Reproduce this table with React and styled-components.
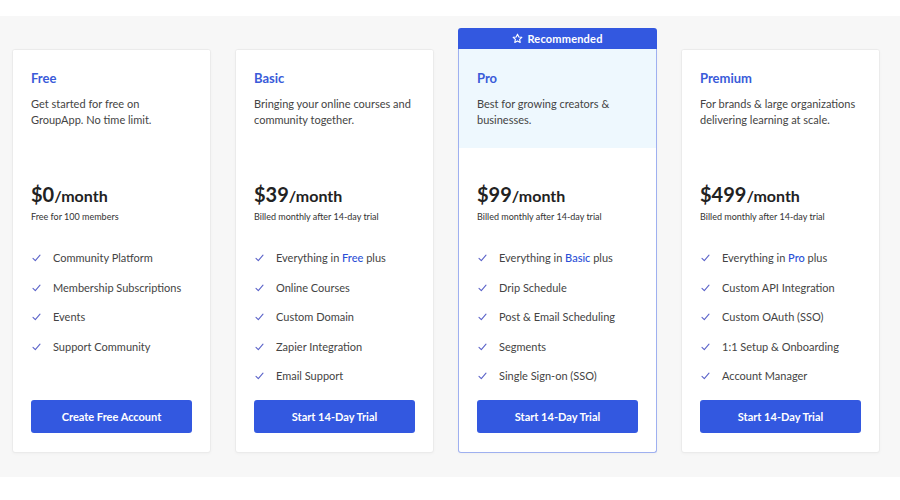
import styled, { createGlobalStyle } from "styled-components";

const GlobalStyle = createGlobalStyle`
  body {
    margin: 0;
    background: #ffffff;
    font-family: Lato, "Open Sans", sans-serif;
  }
`;

const Section = styled.section`
  margin-top: 16px;
  background: #f7f7f7;
  padding: 12px 20px 24px 12px;
`;

const Row = styled.div`
  display: flex;
  align-items: flex-end;
  gap: 24px;
`;

const Plan = styled.div`
  width: 199px;
  display: flex;
  flex-direction: column;
`;

const Banner = styled.div`
  height: 21px;
  background: #3358e0;
  border-radius: 3px 3px 0 0;
  color: #fff;
  font-size: 11px;
  font-weight: 700;
  display: flex;
  align-items: center;
  justify-content: center;
  gap: 4px;
  letter-spacing: 0.2px;
`;

const Card = styled.div`
  height: 404px;
  box-sizing: border-box;
  background: #fff;
  border: 1px solid ${(p) => (p.$featured ? "#9fb0f0" : "#ebebeb")};
  border-top: ${(p) => (p.$featured ? "none" : "1px solid #ebebeb")};
  border-radius: ${(p) => (p.$featured ? "0 0 3px 3px" : "3px")};
  box-shadow: 0 1px 3px rgba(0, 0, 0, 0.03);
  display: flex;
  flex-direction: column;
  overflow: hidden;
`;

const Header = styled.div`
  padding: ${(p) => (p.$featured ? "21px" : "20px")} 18px 20px;
  background: ${(p) => (p.$featured ? "#eef8fe" : "#fff")};
`;

const Name = styled.div`
  color: #3a5bd9;
  font-size: 13px;
  font-weight: 700;
  line-height: 16px;
`;

const Desc = styled.p`
  margin: 10px 0 0;
  color: #444;
  font-size: 11px;
  line-height: 16px;
`;

const Body = styled.div`
  flex: 1;
  padding: 34px 18px 19px;
  display: flex;
  flex-direction: column;
`;

const Price = styled.div`
  color: #222;
  font-size: 20px;
  font-weight: 700;
  line-height: 24px;
`;

const Per = styled.span`
  font-size: 16px;
`;

const Note = styled.div`
  margin-top: 3px;
  color: #333;
  font-size: 9px;
  line-height: 12px;
`;

const Features = styled.ul`
  list-style: none;
  margin: 27px 0 0;
  padding: 0;
  display: flex;
  flex-direction: column;
  gap: 13.5px;
`;

const Feature = styled.li`
  display: flex;
  align-items: center;
  gap: 12px;
  color: #444;
  font-size: 11px;
  line-height: 16px;
  padding-left: 1px;
`;

const Link = styled.span`
  color: #2b4fd6;
  font-weight: 500;
`;

const Button = styled.button`
  margin-top: auto;
  height: 33px;
  border: none;
  border-radius: 3px;
  background: #3358e0;
  color: #fff;
  font-family: inherit;
  font-size: 11px;
  font-weight: 700;
  cursor: pointer;
`;

const Check = () => (
  <svg width="9" height="8" viewBox="0 0 9 8" fill="none">
    <path d="M1 4.4 L3.3 6.6 L8 1.2" stroke="#5b63c9" strokeWidth="1.1" strokeLinecap="round" strokeLinejoin="round" />
  </svg>
);

const Star = () => (
  <svg width="11" height="11" viewBox="0 0 24 24" fill="none" stroke="#fff" strokeWidth="2.4" strokeLinejoin="round">
    <path d="M12 2.5l2.9 6.1 6.6.8-4.9 4.6 1.3 6.6L12 17.3l-5.9 3.3 1.3-6.6-4.9-4.6 6.6-.8z" />
  </svg>
);

const plans = [
  {
    name: "Free",
    desc: "Get started for free on GroupApp. No time limit.",
    price: "$0",
    note: "Free for 100 members",
    features: ["Community Platform", "Membership Subscriptions", "Events", "Support Community"],
    cta: "Create Free Account",
  },
  {
    name: "Basic",
    desc: "Bringing your online courses and community together.",
    price: "$39",
    note: "Billed monthly after 14-day trial",
    base: "Free",
    features: ["Online Courses", "Custom Domain", "Zapier Integration", "Email Support"],
    cta: "Start 14-Day Trial",
  },
  {
    name: "Pro",
    desc: "Best for growing creators & businesses.",
    price: "$99",
    note: "Billed monthly after 14-day trial",
    base: "Basic",
    featured: true,
    features: ["Drip Schedule", "Post & Email Scheduling", "Segments", "Single Sign-on (SSO)"],
    cta: "Start 14-Day Trial",
  },
  {
    name: "Premium",
    desc: "For brands & large organizations delivering learning at scale.",
    price: "$499",
    note: "Billed monthly after 14-day trial",
    base: "Pro",
    features: ["Custom API Integration", "Custom OAuth (SSO)", "1:1 Setup & Onboarding", "Account Manager"],
    cta: "Start 14-Day Trial",
  },
];

const App = () => (
  <>
    <GlobalStyle />
    <Section>
      <Row>
        {plans.map((plan) => (
          <Plan key={plan.name}>
            {plan.featured && (
              <Banner>
                <Star />
                Recommended
              </Banner>
            )}
            <Card $featured={plan.featured}>
              <Header $featured={plan.featured}>
                <Name>{plan.name}</Name>
                <Desc>{plan.desc}</Desc>
              </Header>
              <Body>
                <Price>
                  {plan.price}
                  <Per>/month</Per>
                </Price>
                <Note>{plan.note}</Note>
                <Features>
                  {plan.base && (
                    <Feature>
                      <Check />
                      <span>
                        Everything in <Link>{plan.base}</Link> plus
                      </span>
                    </Feature>
                  )}
                  {plan.features.map((f) => (
                    <Feature key={f}>
                      <Check />
                      {f}
                    </Feature>
                  ))}
                </Features>
                <Button>{plan.cta}</Button>
              </Body>
            </Card>
          </Plan>
        ))}
      </Row>
    </Section>
  </>
);

export default App;
